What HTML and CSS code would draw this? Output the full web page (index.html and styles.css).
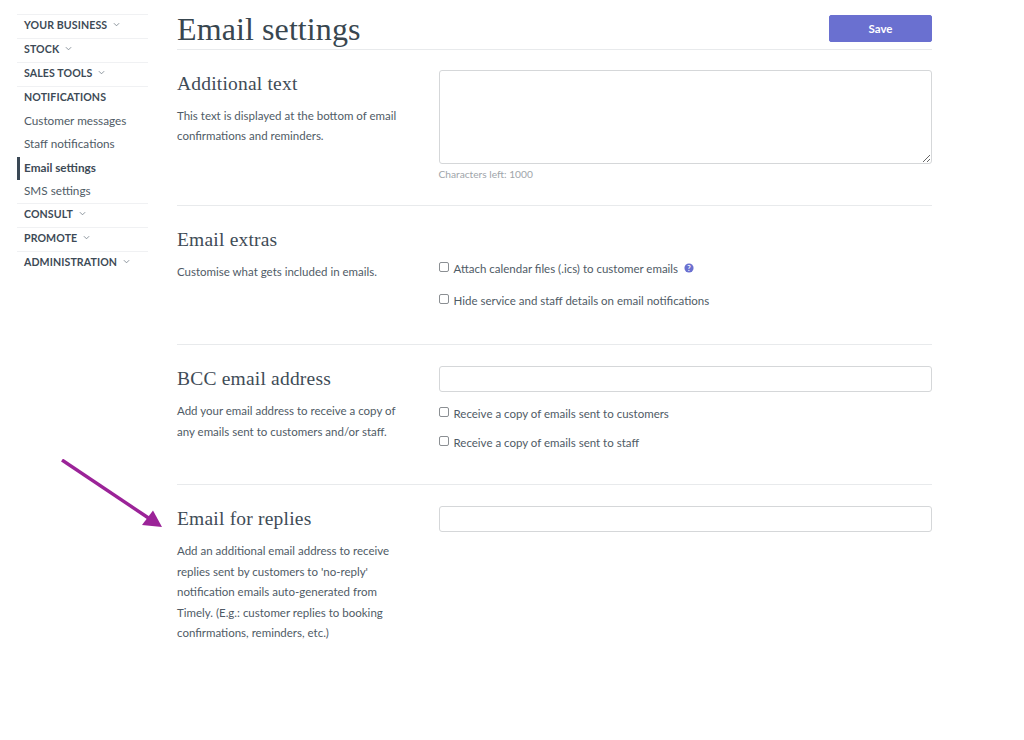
FILE: index.html
```html
<!DOCTYPE html>
<html lang="en">
<head>
<meta charset="utf-8">
<title>Email settings</title>
<link rel="stylesheet" href="styles.css">
</head>
<body>
<div class="page">
  <nav class="sidebar">
    <div class="nav-head">YOUR BUSINESS <svg class="chev" viewBox="0 0 8 5"><path d="M1 1l3 3 3-3"/></svg></div>
    <div class="nav-head">STOCK <svg class="chev" viewBox="0 0 8 5"><path d="M1 1l3 3 3-3"/></svg></div>
    <div class="nav-head">SALES TOOLS <svg class="chev" viewBox="0 0 8 5"><path d="M1 1l3 3 3-3"/></svg></div>
    <div class="nav-head open">NOTIFICATIONS</div>
    <div class="nav-sub">Customer messages</div>
    <div class="nav-sub">Staff notifications</div>
    <div class="nav-sub active">Email settings</div>
    <div class="nav-sub">SMS settings</div>
    <div class="nav-head">CONSULT <svg class="chev" viewBox="0 0 8 5"><path d="M1 1l3 3 3-3"/></svg></div>
    <div class="nav-head">PROMOTE <svg class="chev" viewBox="0 0 8 5"><path d="M1 1l3 3 3-3"/></svg></div>
    <div class="nav-head last">ADMINISTRATION <svg class="chev" viewBox="0 0 8 5"><path d="M1 1l3 3 3-3"/></svg></div>
  </nav>
  <main class="main">
    <header class="title-bar">
      <h1>Email settings</h1>
      <button class="save">Save</button>
    </header>
    <section class="row row-text">
      <div class="info">
        <h2>Additional text</h2>
        <p>This text is displayed at the bottom of email confirmations and reminders.</p>
      </div>
      <div class="fields">
        <textarea class="area"></textarea>
        <div class="hint">Characters left: 1000</div>
      </div>
    </section>
    <section class="row row-extras">
      <div class="info">
        <h2>Email extras</h2>
        <p>Customise what gets included in emails.</p>
      </div>
      <div class="fields checks-extras">
        <label class="check"><input type="checkbox"><span>Attach calendar files (.ics) to customer emails</span>
          <svg class="help" viewBox="0 0 12 12"><circle cx="6" cy="6" r="5.5"/><text x="6" y="9" text-anchor="middle">?</text></svg></label>
        <label class="check"><input type="checkbox"><span>Hide service and staff details on email notifications</span></label>
      </div>
    </section>
    <section class="row row-bcc">
      <div class="info">
        <h2>BCC email address</h2>
        <p>Add your email address to receive a copy of any emails sent to customers and/or staff.</p>
      </div>
      <div class="fields">
        <input class="text" type="text">
        <div class="checks-bcc">
          <label class="check"><input type="checkbox"><span>Receive a copy of emails sent to customers</span></label>
          <label class="check"><input type="checkbox"><span>Receive a copy of emails sent to staff</span></label>
        </div>
      </div>
    </section>
    <section class="row row-last">
      <div class="info">
        <h2>Email for replies</h2>
        <p>Add an additional email address to receive replies sent by customers to 'no-reply' notification emails auto-generated from Timely. (E.g.: customer replies to booking confirmations, reminders, etc.)</p>
      </div>
      <div class="fields">
        <input class="text" type="text">
      </div>
    </section>
  </main>
</div>
<svg class="arrow" viewBox="0 0 110 75" width="110" height="75">
  <path class="arrow-line" d="M2 1L90 60"/>
  <path class="arrow-head" d="M102 68L82 66 93 51.6Z"/>
</svg>
</body>
</html>
```
FILE: styles.css
```css
* { box-sizing: border-box; }
html, body { margin: 0; padding: 0; background: #fff; }
body {
  width: 1024px; height: 740px; overflow: hidden; position: relative;
  font-family: Lato, "Open Sans", sans-serif; color: #4a5661;
}
.page { display: flex; align-items: flex-start; padding: 0 92px 0 17px; }
.sidebar { width: 131px; flex: none; margin-top: 14px; margin-right: 29px; }
.nav-head {
  height: 24px; padding: 0 0 4px 7px; border-top: 1px solid #f0f1f3;
  display: flex; align-items: center; gap: 6px;
  font-size: 10.6px; font-weight: 700; color: #3d4a56; letter-spacing: 0.1px;
}
.nav-sub {
  height: 23.3px; padding: 0 0 2px 4px; display: flex; align-items: center;
  font-size: 11.75px; color: #4f5b66; border-left: 3px solid transparent;
}
.nav-sub.active { border-left-color: #3a4855; font-weight: 700; color: #3d4a56; }
.chev { width: 7px; height: 5px; fill: none; stroke: #7d8790; stroke-width: 1; }
.main { flex: 1; min-width: 0; }
.title-bar {
  height: 50px; display: flex; justify-content: space-between; align-items: flex-start;
  border-bottom: 1px solid #e8eaec;
}
h1 {
  margin: 11px 0 0; font-family: "Liberation Serif", serif; font-weight: 400;
  font-size: 32px; line-height: 36px; color: #38464f; letter-spacing: 0.1px;
}
.save {
  margin-top: 15px; width: 103px; height: 27px; border: 1px solid #6a70d0; border-radius: 2px;
  background: #6a70d0; color: #fff; font: 700 11.5px Lato, sans-serif; padding: 0;
}
.row { display: flex; border-bottom: 1px solid #e8eaec; }
.row-text { height: 156px; padding-top: 20px; }
.row-text .info { padding-top: 1px; }
.row-text p { line-height: 20px; }
.row-extras { height: 139px; padding-top: 21px; }
.row-bcc { height: 140px; padding-top: 21px; }
.row-last { border-bottom: 0; padding-top: 21px; }
.info { width: 261.5px; flex: none; }
h2 {
  margin: 0; font-family: "Liberation Serif", serif; font-weight: 400;
  font-size: 19.5px; line-height: 26px; color: #3f4c57; letter-spacing: 0.2px;
}
p { margin: 9px 0 0; width: 232px; font-size: 11.5px; line-height: 20.5px; color: #4f5b66; }
.fields { flex: 1; min-width: 0; }
.area {
  display: block; width: 100%; height: 94px; border: 1px solid #d5d7d9; border-radius: 3px;
  background: #fff; margin: 0; padding: 6px; resize: both;
}
.hint { margin-top: 2px; font-size: 10.2px; line-height: 16px; color: #a0a5aa; }
.text {
  display: block; width: 100%; height: 26px; border: 1px solid #d5d7d9; border-radius: 3px;
  background: #fff; margin: 0; padding: 0 6px;
}
.check { display: flex; align-items: center; height: 20px; font-size: 11.5px; color: #4f5b66; }
.check input {
  appearance: none; width: 10px; height: 10px; margin: 0 5px 3px 0; flex: none;
  border: 1px solid #8b8f93; border-radius: 2px; background: #fff;
}
.checks-extras { padding-top: 31px; }
.checks-extras .check + .check { margin-top: 12px; }
.checks-bcc { margin-top: 11px; }
.checks-bcc .check + .check { margin-top: 9px; }
.help { width: 10px; height: 10px; margin-left: 6px; }
.help circle { fill: #6a70d0; }
.help text { fill: #fff; font: 700 9px Lato, sans-serif; }
.arrow { position: absolute; left: 60px; top: 459px; }
.arrow-line { stroke: #9b2398; stroke-width: 3.4; fill: none; }
.arrow-head { fill: #9b2398; }
```
